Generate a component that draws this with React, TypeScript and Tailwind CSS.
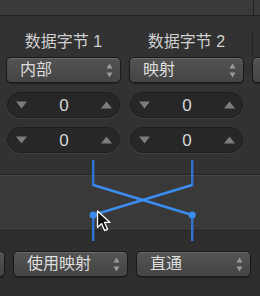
const Arrows = () => (
  <svg width="7" height="15" viewBox="0 0 7 15" className="shrink-0">
    <path d="M3.5 0.5 L6.5 5.5 L0.5 5.5 Z" fill="#9a9a9a" />
    <path d="M3.5 14.5 L6.5 9.5 L0.5 9.5 Z" fill="#9a9a9a" />
  </svg>
);

const Dropdown = ({ label }: { label?: string }) => (
  <div className="flex h-[26px] w-[115px] shrink-0 items-center justify-between rounded-[5px] border border-[#1a1a1a] bg-linear-to-b from-[#545454] to-[#444444] pl-[13px] pr-[7px] text-[16px] leading-none text-[#dedede] shadow-[inset_0_1px_0_rgba(255,255,255,0.13),0_1px_1px_rgba(0,0,0,0.3)]">
    <span>{label}</span>
    <Arrows />
  </div>
);

const Stepper = () => (
  <div className="flex h-[26px] w-[113px] items-center justify-between rounded-full border border-[#1e1e1e] bg-[#272727] pl-[8px] pr-[7px] shadow-[0_1px_0_rgba(255,255,255,0.07)]">
    <svg width="11" height="8" viewBox="0 0 11 8">
      <path d="M0 0.5 L11 0.5 L5.5 7.5 Z" fill="#7c7c7c" />
    </svg>
    <span className="font-['Liberation_Sans',sans-serif] text-[17px] leading-none text-[#d6d6d6]">0</span>
    <svg width="11" height="8" viewBox="0 0 11 8">
      <path d="M0 7.5 L11 7.5 L5.5 0.5 Z" fill="#7c7c7c" />
    </svg>
  </div>
);

const Column = ({ title, value }: { title: string; value: string }) => (
  <div className="flex w-[115px] shrink-0 flex-col items-center">
    <div className="h-[22px] text-[16px] leading-[22px] text-[#d0d0d0]">{title}</div>
    <div className="mt-[4px]">
      <Dropdown label={value} />
    </div>
    <div className="mt-[9px]">
      <Stepper />
    </div>
    <div className="mt-[9px]">
      <Stepper />
    </div>
  </div>
);

export default function App() {
  return (
    <div className="h-[296px] w-[260px] overflow-hidden bg-[#323232] font-['Liberation_Sans','Noto_Sans_CJK_SC',sans-serif] select-none">
      {/* top strip */}
      <div className="flex h-[16px] border-b border-[#222222] bg-[#3a3a3a]">
        <div className="w-[253px]" />
        <div className="flex-1 border-l border-[#232323]" />
      </div>

      <div className="flex gap-[8px] pl-[6px] pt-[15px]">
        <Column title="数据字节 1" value="内部" />
        <Column title="数据字节 2" value="映射" />
        <div className="flex flex-col">
          <div className="h-[26px] w-px bg-[#242424]" />
          <div>
            <Dropdown />
          </div>
        </div>
      </div>

      {/* mapping area */}
      <div className="relative h-[88px]">
        <div className="h-[22px] border-b border-[#262626]" />
        <div className="h-[56px] border-t border-b border-t-[#474747] border-b-[#242424] bg-[#393939]" />
        <div className="h-[10px] bg-[#2e2e2e]" />

        <svg className="absolute inset-0" width="260" height="88" viewBox="0 0 260 88">
          <g stroke="#2f74d2" strokeWidth="2.4" fill="none">
            <path d="M93.2 7 V33" />
            <path d="M192.2 7 V33" />
            <path d="M93.2 62 V88" />
            <path d="M192.2 62 V88" />
          </g>
          <g stroke="#3a8cee" strokeWidth="2.6" fill="none" strokeLinejoin="round">
            <path d="M93.2 32 L192.2 62" />
            <path d="M192.2 32 L93.2 62" />
          </g>
          <circle cx="93.2" cy="62" r="3.6" fill="#3a8cee" />
          <circle cx="192.2" cy="62" r="3.6" fill="#3a8cee" />
        </svg>

        {/* mouse pointer */}
        <svg className="absolute left-[96px] top-[57px]" width="17" height="23" viewBox="0 0 17 23">
          <path
            d="M1.5 1 L1.5 17.5 L5.5 13.6 L8.6 20.6 L11.6 19.3 L8.6 12.4 L14 12.4 Z"
            fill="#111"
            stroke="#fff"
            strokeWidth="1.3"
            strokeLinejoin="round"
          />
        </svg>
      </div>

      {/* bottom row */}
      <div className="flex h-[55px] gap-[8px] bg-[#2e2e2e] pt-[10px] pl-[13px]">
        <div className="-ml-[123px]">
          <Dropdown />
        </div>
        <Dropdown label="使用映射" />
        <Dropdown label="直通" />
      </div>
    </div>
  );
}
